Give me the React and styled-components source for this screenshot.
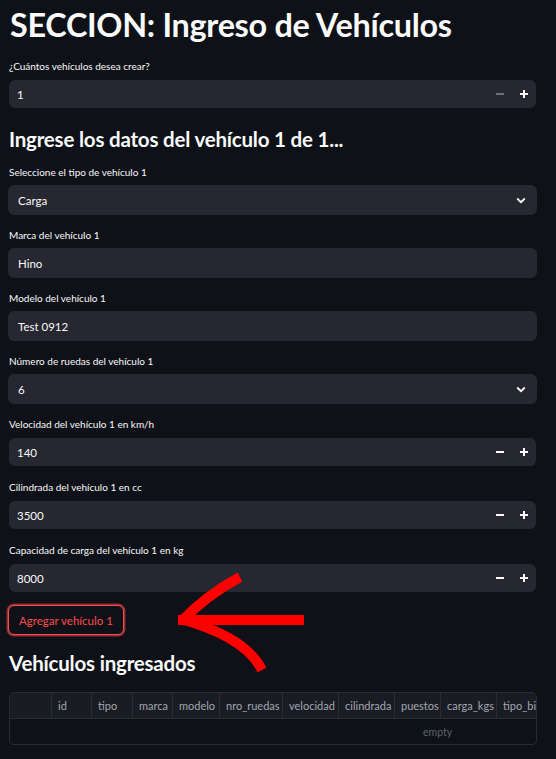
import React from "react";
import styled, { createGlobalStyle } from "styled-components";

const GlobalStyle = createGlobalStyle`
  html, body { margin: 0; padding: 0; background: #0e1117; }
  body { font-family: Lato, "Noto Sans", sans-serif; color: #fafafa; }
  * { box-sizing: border-box; }
`;

const Page = styled.div`
  position: relative;
  width: 556px;
  min-height: 759px;
  background: #0e1117;
  overflow: hidden;
`;

const Main = styled.main`
  width: 529px;
  margin-left: 8px;
  display: flex;
  flex-direction: column;
`;

const Title = styled.h1`
  margin: 5px 0 13px 2px;
  font-size: 32.4px;
  line-height: 40px;
  font-weight: 700;
  letter-spacing: -0.3px;
  color: #fafafa;
  white-space: nowrap;
`;

const SubTitle = styled.h2`
  margin: 3px 0 10px 1px;
  font-size: 20.5px;
  line-height: 30px;
  font-weight: 700;
  letter-spacing: -0.2px;
  color: #fafafa;
  white-space: nowrap;
`;

const SectionTitle = styled.h3`
  margin: 14px 0 15px 1px;
  font-size: 20.5px;
  line-height: 28px;
  font-weight: 700;
  letter-spacing: -0.2px;
  color: #fafafa;
`;

const Field = styled.div`
  display: flex;
  flex-direction: column;
  margin-bottom: 12px;
`;

const Label = styled.label`
  font-size: 10px;
  line-height: 16px;
  height: 16px;
  margin: 0 0 5px 1px;
  color: #fafafa;
  white-space: nowrap;
`;

const Box = styled.div`
  display: flex;
  align-items: center;
  height: ${(p) => (p.$number ? "28px" : "30px")};
  margin: ${(p) => (p.$number ? "1px 1px" : "0")};
  padding: 0 ${(p) => (p.$number ? "0" : "11px")} 0 ${(p) => (p.$number ? "8px" : "10px")};
  background: #262730;
  border-radius: 6px;
  font-size: 11.5px;
  color: #fafafa;
`;

const Value = styled.span`
  flex: 1;
`;

const StepButton = styled.span`
  width: 24px;
  height: 28px;
  display: flex;
  align-items: center;
  justify-content: center;
`;

const Chevron = () => (
  <svg width="10" height="7" viewBox="0 0 10 7">
    <path d="M1.2 1.5 L5 5.2 L8.8 1.5" fill="none" stroke="#fafafa" strokeWidth="1.8" />
  </svg>
);

const Minus = ({ disabled }) => (
  <svg width="8" height="8" viewBox="0 0 8 8">
    <rect x="0" y="3" width="8" height="2" fill={disabled ? "#6b6d78" : "#fafafa"} />
  </svg>
);

const Plus = () => (
  <svg width="8" height="8" viewBox="0 0 8 8">
    <rect x="0" y="3" width="8" height="2" fill="#fafafa" />
    <rect x="3" y="0" width="2" height="8" fill="#fafafa" />
  </svg>
);

const NumberField = ({ label, value, minDisabled }) => (
  <Field>
    <Label>{label}</Label>
    <Box $number>
      <Value>{value}</Value>
      <StepButton><Minus disabled={minDisabled} /></StepButton>
      <StepButton><Plus /></StepButton>
    </Box>
  </Field>
);

const SelectField = ({ label, value }) => (
  <Field>
    <Label>{label}</Label>
    <Box>
      <Value>{value}</Value>
      <Chevron />
    </Box>
  </Field>
);

const TextField = ({ label, value }) => (
  <Field>
    <Label>{label}</Label>
    <Box>
      <Value>{value}</Value>
    </Box>
  </Field>
);

const ButtonRow = styled.div`
  display: flex;
`;

const AddButton = styled.button`
  height: 30px;
  padding: 0 10px;
  background: #0e1117;
  border: 1px solid #ff4b4b;
  box-shadow: 0 0 0 1.5px rgba(255, 75, 75, 0.55);
  border-radius: 6px;
  color: #ff4b4b;
  font-family: inherit;
  font-size: 11.5px;
  cursor: pointer;
`;

const Table = styled.div`
  margin-left: 1px;
  width: 528px;
  border: 1px solid #2a2c35;
  border-radius: 5px;
  overflow: hidden;
`;

const HeaderRow = styled.div`
  display: flex;
  height: 26px;
  background: #1a1c24;
  border-bottom: 1px solid #2a2c35;
`;

const HeaderCell = styled.div`
  flex: 0 0 ${(p) => p.$w}px;
  padding-left: 6px;
  display: flex;
  align-items: center;
  font-size: 11px;
  color: #a3a6b0;
  border-right: 1px solid #2a2c35;
  white-space: nowrap;
  overflow: hidden;
`;

const EmptyRow = styled.div`
  height: 25px;
  display: flex;
  align-items: center;
  padding-left: 413px;
  font-size: 10.5px;
  color: #5e616c;
`;

const Arrow = styled.svg`
  position: absolute;
  left: 0;
  top: 0;
  pointer-events: none;
`;

const columns = [
  ["", 42],
  ["id", 40],
  ["tipo", 41],
  ["marca", 40],
  ["modelo", 47],
  ["nro_ruedas", 63],
  ["velocidad", 56],
  ["cilindrada", 56],
  ["puestos", 46],
  ["carga_kgs", 56],
  ["tipo_bicicleta", 80],
];

export default function App() {
  return (
    <>
      <GlobalStyle />
      <Page>
        <Main>
          <Title>SECCION: Ingreso de Vehículos</Title>
          <NumberField label="¿Cuántos vehículos desea crear?" value="1" minDisabled />
          <SubTitle>Ingrese los datos del vehículo 1 de 1...</SubTitle>
          <SelectField label="Seleccione el tipo de vehículo 1" value="Carga" />
          <TextField label="Marca del vehículo 1" value="Hino" />
          <TextField label="Modelo del vehículo 1" value="Test 0912" />
          <SelectField label="Número de ruedas del vehículo 1" value="6" />
          <NumberField label="Velocidad del vehículo 1 en km/h" value="140" />
          <NumberField label="Cilindrada del vehículo 1 en cc" value="3500" />
          <NumberField label="Capacidad de carga del vehículo 1 en kg" value="8000" />
          <ButtonRow>
            <AddButton>Agregar vehículo 1</AddButton>
          </ButtonRow>
          <SectionTitle>Vehículos ingresados</SectionTitle>
          <Table>
            <HeaderRow>
              {columns.map(([name, w], i) => (
                <HeaderCell key={i} $w={w}>{name}</HeaderCell>
              ))}
            </HeaderRow>
            <EmptyRow>empty</EmptyRow>
          </Table>
        </Main>
        <Arrow width="556" height="759" viewBox="0 0 556 759">
          <g fill="none" stroke="#ff0000" strokeWidth="10" strokeLinecap="butt" strokeLinejoin="round">
            <path d="M178 620 L304 620" />
            <path d="M181 622 Q205 596 240 577" />
            <path d="M181 619 C212 628 248 642 262 670" />
          </g>
        </Arrow>
      </Page>
    </>
  );
}
